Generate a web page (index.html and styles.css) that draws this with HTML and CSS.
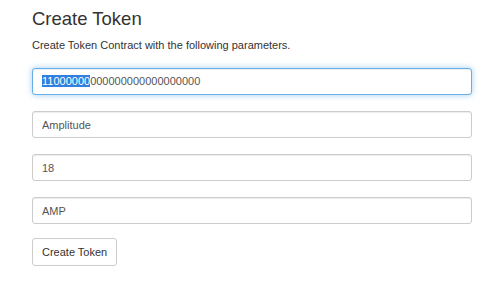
FILE: index.html
```html
<!DOCTYPE html>
<html>
<head>
<meta charset="utf-8">
<link rel="stylesheet" href="styles.css">
</head>
<body>
<div class="page">
  <h3 class="title">Create Token</h3>
  <p class="lead">Create Token Contract with the following parameters.</p>
  <form class="form">
    <div class="field field-focus" role="textbox"><span class="sel">11000000</span>000000000000000000</div>
    <input class="field" type="text" value="Amplitude">
    <input class="field" type="text" value="18">
    <input class="field" type="text" value="AMP">
    <div class="actions"><button type="button" class="btn">Create Token</button></div>
  </form>
</div>
</body>
</html>
```
FILE: styles.css
```css
html, body {
  margin: 0;
  padding: 0;
  background: #ffffff;
}
body {
  font-family: "Liberation Sans", Arial, sans-serif;
  font-size: 11px;
  color: #333333;
}
.page {
  width: 440px;
  padding: 8px 0 0 32px;
}
.title {
  margin: 0;
  font-size: 18.5px;
  font-weight: normal;
  line-height: 22px;
  color: #333333;
}
.lead {
  margin: 8px 0 0 0;
  line-height: 14px;
  font-size: 11px;
}
.form {
  display: flex;
  flex-direction: column;
  gap: 16px;
  margin-top: 16px;
}
.field {
  box-sizing: border-box;
  display: block;
  width: 440px;
  height: 27px;
  margin: 0;
  padding: 0 9px;
  border: 1px solid #cccccc;
  border-radius: 3px;
  background: #ffffff;
  font-family: "Liberation Sans", Arial, sans-serif;
  font-size: 11px;
  line-height: 25px;
  color: #555555;
  box-shadow: inset 0 1px 1px rgba(0,0,0,0.075);
  outline: none;
}
.field-focus {
  border-color: #66afe9;
  box-shadow: inset 0 1px 1px rgba(0,0,0,0.075), 0 0 6px rgba(102,175,233,0.6);
  white-space: nowrap;
}
.sel {
  background: #2f80e0;
  color: #ffffff;
}
.actions {
  display: flex;
  margin-top: -2px;
}
.btn {
  box-sizing: border-box;
  height: 28px;
  padding: 0 9px;
  border: 1px solid #cccccc;
  border-radius: 3px;
  background: #ffffff;
  font-family: "Liberation Sans", Arial, sans-serif;
  font-size: 11px;
  color: #333333;
}
```
